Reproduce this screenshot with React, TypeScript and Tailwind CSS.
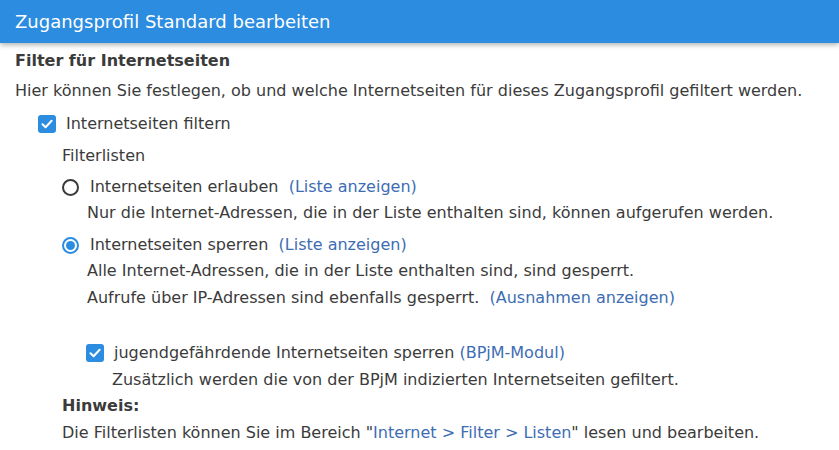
import React from 'react';

const Checkbox: React.FC = () => (
  <span className="inline-flex h-[18px] w-[18px] shrink-0 items-center justify-center rounded-[3px] bg-[#2b8ce0]">
    <svg width="12" height="10" viewBox="0 0 12 10" fill="none">
      <path d="M1.5 5.2 L4.6 8.2 L10.6 1.8" stroke="white" strokeWidth="2" strokeLinecap="round" strokeLinejoin="round" />
    </svg>
  </span>
);

const Radio: React.FC<{ checked?: boolean }> = ({ checked }) => (
  <span
    className={
      checked
        ? 'inline-flex h-[17px] w-[17px] shrink-0 items-center justify-center rounded-full border-2 border-[#2b8ce0] bg-white'
        : 'inline-flex h-[17px] w-[17px] shrink-0 items-center justify-center rounded-full border-2 border-[#3a3a3a] bg-white'
    }
  >
    {checked && <span className="h-[9px] w-[9px] rounded-full bg-[#2b8ce0]" />}
  </span>
);

const Link: React.FC<{ children: React.ReactNode }> = ({ children }) => (
  <span className="text-[#3d6db3]">{children}</span>
);

export default function App() {
  return (
    <div
      className="h-[450px] w-[839px] overflow-hidden bg-white text-[16px] text-[#3b3b3b]"
      style={{ fontFamily: '"DejaVu Sans", Verdana, sans-serif' }}
    >
      <div className="relative z-10 flex h-[43px] items-center bg-[#2b8ce0] px-[15px] text-[18px] text-white shadow-[0_2px_5px_rgba(0,0,0,0.3)]">
        Zugangsprofil Standard bearbeiten
      </div>

      <div className="px-[15px] pt-[5px] leading-[26px]">
        <div className="font-bold">Filter für Internetseiten</div>
        <div className="mt-[4px]">
          Hier können Sie festlegen, ob und welche Internetseiten für dieses Zugangsprofil gefiltert werden.
        </div>

        <div className="mt-[7px] flex items-center gap-[10px] pl-[23px]">
          <Checkbox />
          <span>Internetseiten filtern</span>
        </div>

        <div className="pl-[47px]">
          <div className="mt-[6px]">Filterlisten</div>

          <div className="mt-[5px] flex items-center gap-[11px]">
            <Radio />
            <span>
              Internetseiten erlauben <Link>&nbsp;(Liste anzeigen)</Link>
            </span>
          </div>
          <div className="pl-[25px]">
            Nur die Internet-Adressen, die in der Liste enthalten sind, können aufgerufen werden.
          </div>

          <div className="mt-[6px] flex items-center gap-[11px]">
            <Radio checked />
            <span>
              Internetseiten sperren <Link>&nbsp;(Liste anzeigen)</Link>
            </span>
          </div>
          <div className="pl-[25px]">
            <div>Alle Internet-Adressen, die in der Liste enthalten sind, sind gesperrt.</div>
            <div className="mt-[1px]">
              Aufrufe über IP-Adressen sind ebenfalls gesperrt. <Link>&nbsp;(Ausnahmen anzeigen)</Link>
            </div>
          </div>

          <div className="mt-[29px] flex items-center gap-[10px] pl-[24px]">
            <Checkbox />
            <span>
              jugendgefährdende Internetseiten sperren <Link>(BPjM-Modul)</Link>
            </span>
          </div>
          <div className="mt-[1px] pl-[50px]">
            Zusätzlich werden die von der BPjM indizierten Internetseiten gefiltert.
          </div>

          <div className="font-bold">Hinweis:</div>
          <div className="mt-[1px]">
            Die Filterlisten können Sie im Bereich "<Link>Internet &gt; Filter &gt; Listen</Link>" lesen und bearbeiten.
          </div>
        </div>
      </div>
    </div>
  );
}
